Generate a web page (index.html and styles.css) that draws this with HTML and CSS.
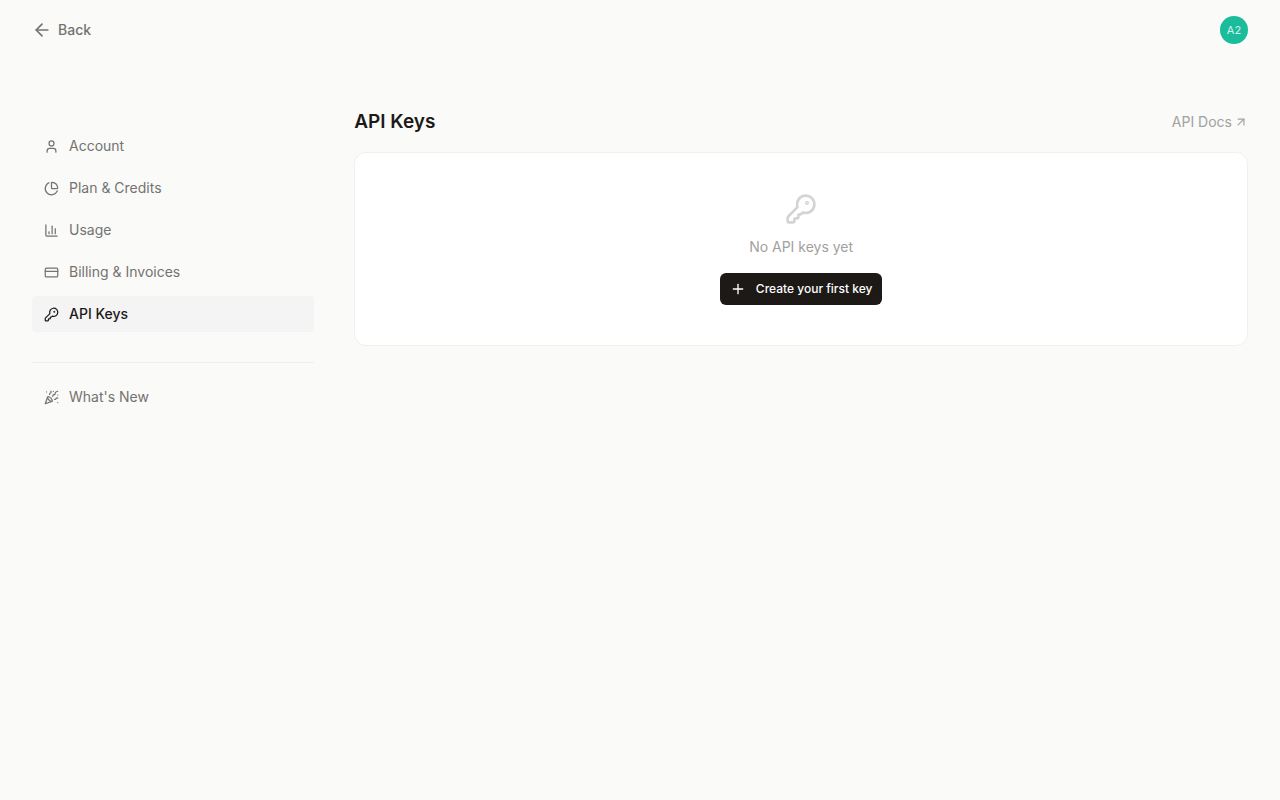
FILE: index.html
```html
<!DOCTYPE html>
<html lang="en">
<head>
    <meta charset="UTF-8">
    <meta name="viewport" content="width=device-width, initial-scale=1.0">
    <title>API Keys</title>
    <link rel="stylesheet" href="styles.css">
</head>
<body>
    <header class="topbar">
        <a class="back" href="#">
            <svg class="icon icon-back" viewBox="0 0 24 24" aria-hidden="true"><path d="m12 19-7-7 7-7"/><path d="M19 12H5"/></svg>
            Back
        </a>
        <button class="avatar" type="button">A2</button>
    </header>

    <div class="layout">
        <nav class="sidebar">
            <a class="nav-item" href="#">
                <svg class="icon" viewBox="0 0 24 24" aria-hidden="true"><path d="M19 21v-2a4 4 0 0 0-4-4H9a4 4 0 0 0-4 4v2"/><circle cx="12" cy="7" r="4"/></svg>
                Account
            </a>
            <a class="nav-item" href="#">
                <svg class="icon" viewBox="0 0 24 24" aria-hidden="true"><path d="M21 12c.552 0 1.005-.449.95-.998a10 10 0 0 0-8.953-8.951c-.55-.055-.998.398-.998.95v8a1 1 0 0 0 1 1z"/><path d="M21.21 15.89A10 10 0 1 1 8 2.83"/></svg>
                Plan &amp; Credits
            </a>
            <a class="nav-item" href="#">
                <svg class="icon" viewBox="0 0 24 24" aria-hidden="true"><path d="M3 3v16a2 2 0 0 0 2 2h16"/><path d="M18 17V9"/><path d="M13 17V5"/><path d="M8 17v-3"/></svg>
                Usage
            </a>
            <a class="nav-item" href="#">
                <svg class="icon" viewBox="0 0 24 24" aria-hidden="true"><rect x="2" y="5" width="20" height="14" rx="2"/><path d="M2 10h20"/></svg>
                Billing &amp; Invoices
            </a>
            <a class="nav-item current" href="#" aria-current="page">
                <svg class="icon" viewBox="0 0 24 24" aria-hidden="true"><path d="M2.586 17.414A2 2 0 0 0 2 18.828V21a1 1 0 0 0 1 1h3a1 1 0 0 0 1-1v-1a1 1 0 0 1 1-1h1a1 1 0 0 0 1-1v-1a1 1 0 0 1 1-1h.172a2 2 0 0 0 1.414-.586l.814-.814a6.5 6.5 0 1 0-4-4z"/><circle class="dot" cx="16.5" cy="7.5" r=".5"/></svg>
                API Keys
            </a>
            <hr class="divider">
            <a class="nav-item" href="#">
                <svg class="icon" viewBox="0 0 24 24" aria-hidden="true"><path d="M5.8 11.3 2 22l10.7-3.79"/><path d="M4 3h.01"/><path d="M22 8h.01"/><path d="M15 2h.01"/><path d="M22 20h.01"/><path d="m22 2-2.24.75a2.9 2.9 0 0 0-1.96 3.12c.1.86-.57 1.63-1.45 1.63h-.38c-.86 0-1.6.6-1.76 1.44L14 10"/><path d="m22 13-.82-.33c-.86-.34-1.82.2-1.98 1.11c-.11.7-.72 1.22-1.43 1.22H17"/><path d="m11 2 .33.82c.34.86-.2 1.82-1.11 1.98C9.52 4.9 9 5.52 9 6.23V7"/><path d="M11 13c1.93 1.93 2.83 4.17 2 5-.83.83-3.07-.07-5-2-1.93-1.93-2.83-4.17-2-5 .83-.83 3.07.07 5 2Z"/></svg>
                What's New
            </a>
        </nav>

        <main>
            <div class="page-head">
                <h1>API Keys</h1>
                <a class="docs-link" href="#">
                    API Docs
                    <svg class="icon icon-arrow" viewBox="0 0 24 24" aria-hidden="true"><path d="M7 7h10v10"/><path d="M7 17 17 7"/></svg>
                </a>
            </div>
            <section class="card">
                <svg class="icon icon-key" viewBox="0 0 24 24" aria-hidden="true"><path d="M2.586 17.414A2 2 0 0 0 2 18.828V21a1 1 0 0 0 1 1h3a1 1 0 0 0 1-1v-1a1 1 0 0 1 1-1h1a1 1 0 0 0 1-1v-1a1 1 0 0 1 1-1h.172a2 2 0 0 0 1.414-.586l.814-.814a6.5 6.5 0 1 0-4-4z"/><circle class="dot" cx="16.5" cy="7.5" r=".5"/></svg>
                <p>No API keys yet</p>
                <button class="create" type="button">
                    <svg class="icon icon-plus" viewBox="0 0 24 24" aria-hidden="true"><path d="M5 12h14"/><path d="M12 5v14"/></svg>
                    Create your first key
                </button>
            </section>
        </main>
    </div>
</body>
</html>
```

FILE: styles.css
```css
* {
    box-sizing: border-box;
}
body {
    margin: 0;
    min-height: 100vh;
    background-color: #fafaf8;
    color: #1c1917;
    font-family: Inter, "Liberation Sans", sans-serif;
    font-size: 14px;
    line-height: 20px;
}
a {
    color: inherit;
    text-decoration: none;
}
button {
    border: none;
    font-family: inherit;
    cursor: pointer;
}
.icon {
    width: 15px;
    height: 15px;
    flex-shrink: 0;
    fill: none;
    stroke: currentColor;
    stroke-width: 2;
    stroke-linecap: round;
    stroke-linejoin: round;
}
.icon .dot {
    fill: currentColor;
}

/* Top bar */
.topbar {
    display: flex;
    align-items: center;
    justify-content: space-between;
    height: 60px;
    padding: 0 32px;
}
.back {
    display: flex;
    align-items: center;
    gap: 6px;
    color: #737371;
    font-weight: 500;
}
.icon-back {
    width: 20px;
    height: 20px;
}
.avatar {
    width: 28px;
    height: 28px;
    padding: 0;
    border-radius: 50%;
    background-color: #1abc9c;
    color: #d5f3ec;
    font-size: 11px;
}

/* Layout */
.layout {
    display: grid;
    grid-template-columns: 6fr 19fr;
    column-gap: 40px;
    padding: 48px 32px;
}
.sidebar {
    display: flex;
    flex-direction: column;
    gap: 6px;
    padding-top: 20px;
}
.nav-item {
    display: flex;
    align-items: center;
    gap: 10px;
    height: 36px;
    padding: 0 12px;
    border-radius: 4px;
    color: #737371;
}
.nav-item.current {
    background-color: #f4f4f4;
    color: #1c1917;
    font-weight: 500;
}
.divider {
    width: 100%;
    margin: 24px 0 10px;
    border: 0;
    border-top: 1px solid #eeeeec;
}

/* Content */
.page-head {
    display: flex;
    align-items: center;
    justify-content: space-between;
    height: 28px;
    margin-bottom: 16px;
}
h1 {
    margin: 0;
    font-size: 19px;
    line-height: 28px;
    font-weight: 600;
}
.docs-link {
    display: flex;
    align-items: center;
    gap: 2px;
    color: #a1a19f;
}
.icon-arrow {
    width: 14px;
    height: 14px;
}
.card {
    display: flex;
    flex-direction: column;
    align-items: center;
    padding: 40px;
    border: 1px solid #f0f0ee;
    border-radius: 12px;
    background-color: #fff;
}
.icon-key {
    width: 32px;
    height: 32px;
    color: #d4d4d4;
}
.card p {
    margin: 12px 0 16px;
    color: #a1a19f;
}
.create {
    display: flex;
    align-items: center;
    gap: 10px;
    height: 32px;
    padding: 0 10px;
    border-radius: 6px;
    background-color: #1c1917;
    color: #fff;
    font-size: 12px;
    line-height: 16px;
    font-weight: 500;
}
.icon-plus {
    width: 16px;
    height: 16px;
}
```
